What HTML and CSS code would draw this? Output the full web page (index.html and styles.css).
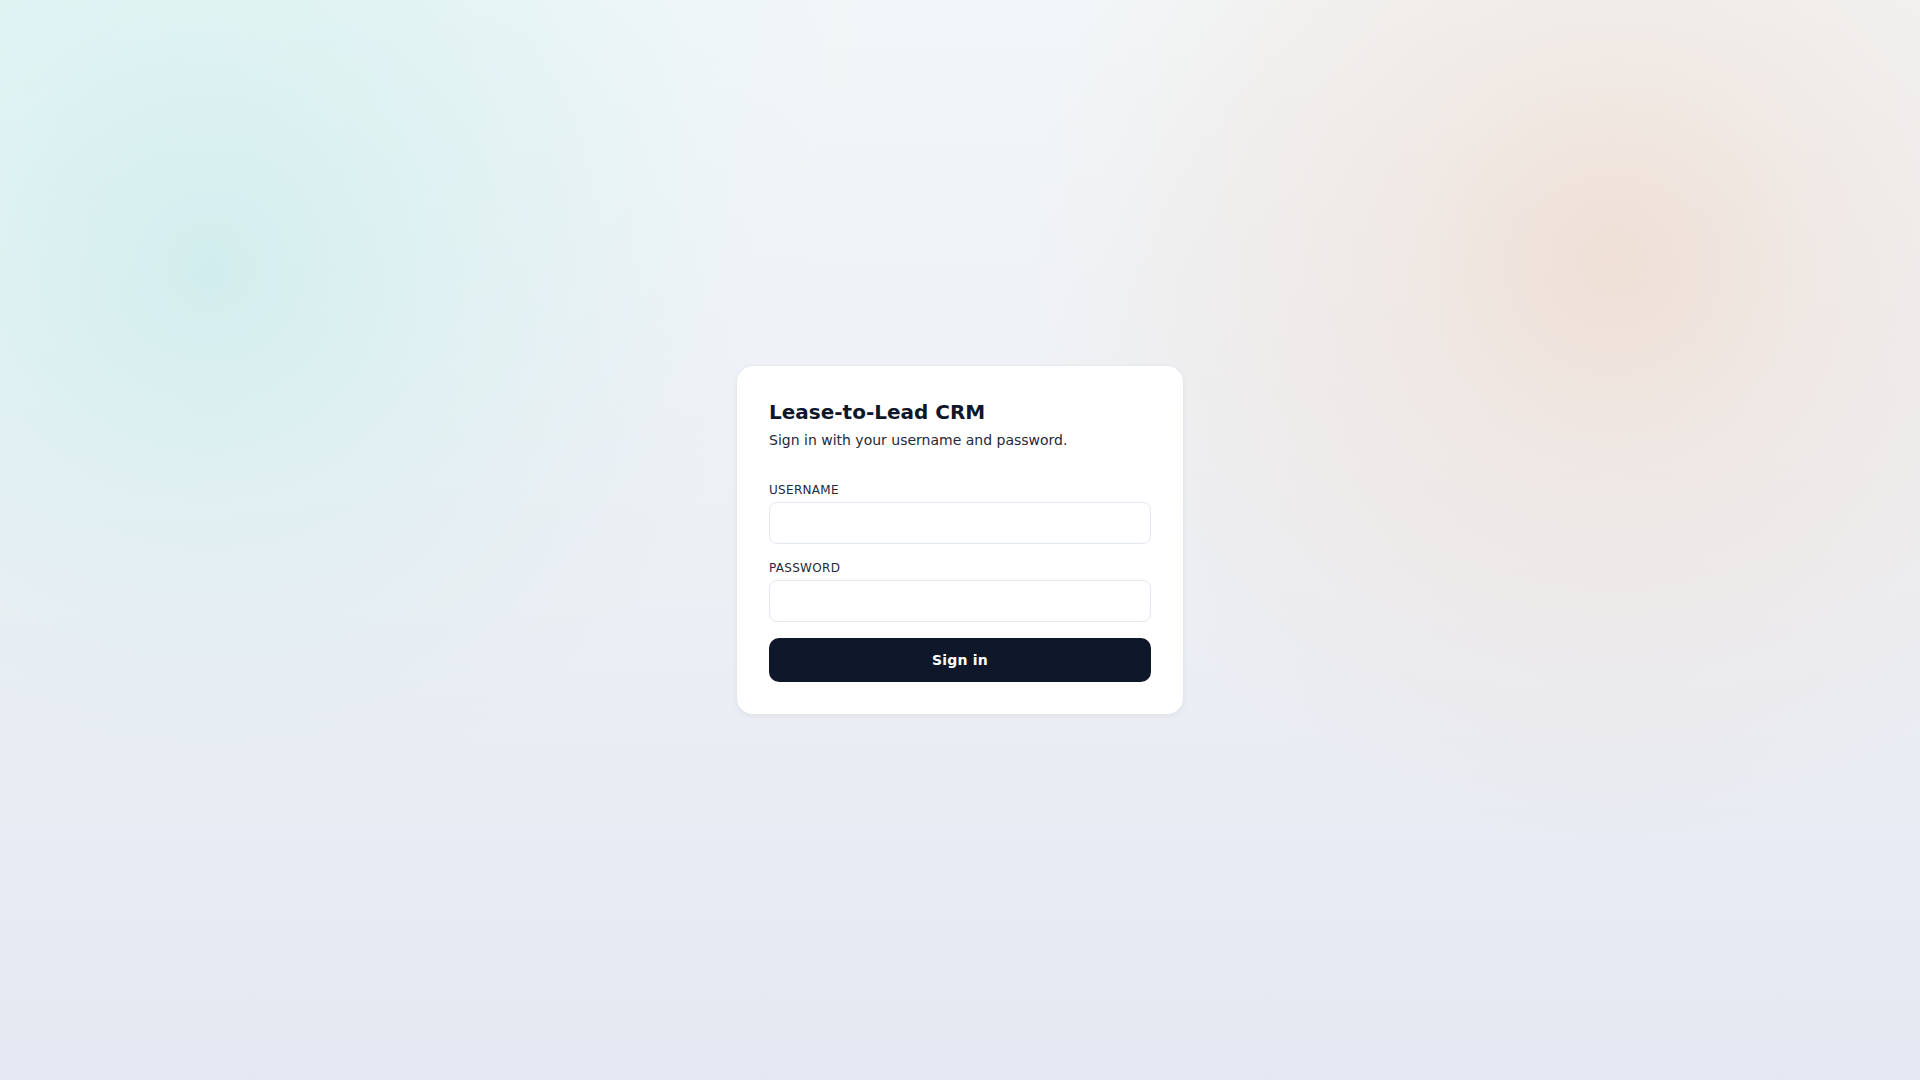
FILE: index.html
```html
<!DOCTYPE html>
<html lang="en">
<head>
<meta charset="utf-8">
<title>Lease-to-Lead CRM</title>
<link rel="stylesheet" href="styles.css">
</head>
<body>
<main class="page">
  <section class="card">
    <h1 class="title">Lease-to-Lead CRM</h1>
    <p class="subtitle">Sign in with your username and password.</p>
    <form class="form">
      <label class="field">
        <span class="label">USERNAME</span>
        <input class="input" type="text" name="username">
      </label>
      <label class="field">
        <span class="label">PASSWORD</span>
        <input class="input" type="password" name="password">
      </label>
      <button class="button" type="button">Sign in</button>
    </form>
  </section>
</main>
</body>
</html>
```

FILE: styles.css
```css
* { box-sizing: border-box; }
html, body { margin: 0; height: 100%; }
body {
  font-family: "DejaVu Sans", sans-serif;
  color: #0f172a;
  background:
    radial-gradient(circle at 11% 25%, rgba(205, 236, 236, 0.8) 0, rgba(210, 238, 238, 0.42) 240px, rgba(215, 240, 240, 0) 540px),
    radial-gradient(circle at 84% 24%, rgba(240, 218, 204, 0.75) 0, rgba(240, 218, 204, 0.38) 230px, rgba(240, 218, 204, 0) 580px),
    radial-gradient(ellipse 900px 600px at 0 0, rgba(225, 246, 244, 0.85) 0, rgba(225, 246, 244, 0) 100%),
    linear-gradient(180deg, #f2f6f8 0%, #eceff4 55%, #e4e8f2 100%);
}
.page {
  min-height: 100vh;
  display: flex;
  align-items: center;
  justify-content: center;
}
.card {
  width: 446px;
  background: #ffffff;
  border-radius: 16px;
  padding: 32px;
  box-shadow: 0 0 0 1px rgba(226, 232, 240, 0.7), 0 2px 6px rgba(15, 23, 42, 0.06);
}
.title {
  margin: 0;
  font-size: 20px;
  line-height: 28px;
  font-weight: 700;
  color: #0f172a;
}
.subtitle {
  margin: 4px 0 0;
  font-size: 14px;
  line-height: 20px;
  color: #1e293b;
}
.form {
  margin-top: 32px;
  display: flex;
  flex-direction: column;
  gap: 16px;
}
.field {
  display: flex;
  flex-direction: column;
  gap: 4px;
}
.label {
  font-size: 12px;
  line-height: 16px;
  color: #1e293b;
  letter-spacing: 0.3px;
}
.input {
  height: 42px;
  width: 100%;
  border: 1px solid #e2e8f0;
  border-radius: 8px;
  background: #fff;
  padding: 0 12px;
  font: inherit;
  font-size: 14px;
}
.button {
  height: 44px;
  width: 100%;
  border: 0;
  border-radius: 10px;
  background: #0f172a;
  color: #ffffff;
  font-family: "DejaVu Sans", sans-serif;
  font-size: 14px;
  font-weight: 700;
  letter-spacing: 0.2px;
}
```
